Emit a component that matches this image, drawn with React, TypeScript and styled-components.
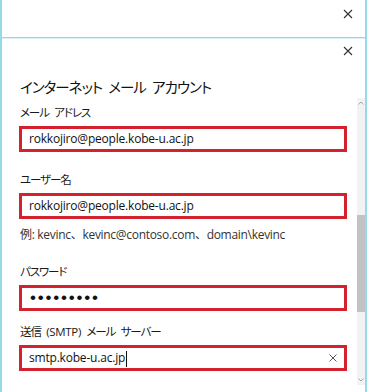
import React from "react";
import styled, { createGlobalStyle } from "styled-components";

const GlobalStyle = createGlobalStyle`
  html, body { margin: 0; padding: 0; background: #ffffff; }
  body {
    font-family: "Open Sans", "Noto Sans CJK JP", sans-serif;
    color: #1a1a1a;
  }
  * { box-sizing: border-box; }
`;

const Frame = styled.div`
  width: 367px;
  height: 392px;
  border-left: 2px solid #93dbe8;
  border-right: 2px solid #93dbe8;
  display: flex;
  flex-direction: column;
  overflow: hidden;
  background: #fff;
`;

const TopBar = styled.div`
  height: 38px;
  flex: none;
  display: flex;
  justify-content: flex-end;
  align-items: flex-start;
  padding: 9px 12px 0 0;
  border-bottom: 1px solid #93dbe8;
  box-shadow: 0 1px 0 #d6f1f6;
`;

const Panel = styled.div`
  flex: 1;
  display: flex;
  flex-direction: column;
  min-height: 0;
`;

const PanelCloseRow = styled.div`
  height: 38px;
  flex: none;
  display: flex;
  justify-content: flex-end;
  align-items: flex-start;
  padding: 8px 12px 0 0;
`;

const CloseIcon = styled.svg`
  width: 10px;
  height: 10px;
  display: block;
`;

const Title = styled.h1`
  margin: 0;
  height: 22px;
  flex: none;
  padding-left: 18px;
  font-size: 14.5px;
  letter-spacing: -1px;
  word-spacing: 4px;
  line-height: 22px;
  font-weight: 400;
  color: #111;
  font-family: "Noto Sans CJK JP", sans-serif;
  font-feature-settings: "palt";
  white-space: nowrap;
`;

const ScrollArea = styled.div`
  flex: none;
  height: 287px;
  display: flex;
  flex-direction: row;
`;

const Content = styled.div`
  flex: 1;
  padding: 7px 10px 0 17px;
  display: flex;
  flex-direction: column;
  overflow: hidden;
`;

const Label = styled.div<{ $top: number }>`
  margin-top: ${(p) => p.$top}px;
  padding-left: 1px;
  font-size: 11.5px;
  letter-spacing: -1.1px;
  word-spacing: 3.5px;
  line-height: 16px;
  height: 16px;
  color: #1a1a1a;
  font-feature-settings: "palt";
  white-space: nowrap;
`;

const Latin = styled.span`
  letter-spacing: -0.3px;
  word-spacing: 0;
`;

const Hint = styled.div`
  margin-top: 8px;
  padding-left: 1px;
  font-size: 12px;
  letter-spacing: -0.3px;
  line-height: 16px;
  height: 16px;
  color: #333;
  white-space: nowrap;
`;

const Box = styled.div`
  margin-top: 5px;
  height: 26px;
  flex: none;
  width: 100%;
  border: 3px solid #d3222d;
  display: flex;
  align-items: center;
  padding: 0 7px 0 7px;
  background: #fff;
`;

const BoxText = styled.span`
  flex: 1;
  font-size: 12px;
  letter-spacing: -0.2px;
  line-height: 18px;
  color: #111;
  white-space: nowrap;
`;

const Dots = styled.span`
  flex: 1;
  padding-left: 1px;
  font-family: "Liberation Sans", sans-serif;
  font-size: 17px;
  line-height: 18px;
  letter-spacing: 1.8px;
  color: #111;
`;

const Caret = styled.span`
  display: inline-block;
  width: 1px;
  height: 16px;
  background: #111;
  vertical-align: middle;
  margin-left: 1px;
`;

const ClearIcon = styled.svg`
  width: 8px;
  height: 8px;
  flex: none;
  display: block;
`;

const Scrollbar = styled.div`
  width: 8px;
  flex: none;
  background: #f2f2f2;
  display: flex;
  flex-direction: column;
`;

const ArrowIcon = styled.svg`
  width: 8px;
  height: 10px;
  flex: none;
  display: block;
`;

const ScrollGap = styled.div<{ $h?: number }>`
  ${(p) => (p.$h !== undefined ? `height: ${p.$h}px; flex: none;` : "flex: 1;")}
`;

const Thumb = styled.div`
  height: 97px;
  flex: none;
  background: #c2c2c2;
`;

function Close({ color = "#333" }: { color?: string }) {
  return (
    <CloseIcon viewBox="0 0 10 10">
      <path d="M1 1 L9 9 M9 1 L1 9" stroke={color} strokeWidth="1.1" fill="none" />
    </CloseIcon>
  );
}

export default function App() {
  return (
    <>
      <GlobalStyle />
      <Frame>
        <TopBar>
          <Close />
        </TopBar>
        <Panel>
          <PanelCloseRow>
            <Close />
          </PanelCloseRow>
          <Title>インターネット メール アカウント</Title>
          <ScrollArea>
            <Content>
              <Label $top={0}>メール アドレス</Label>
              <Box>
                <BoxText>rokkojiro@people.kobe-u.ac.jp</BoxText>
              </Box>
              <Label $top={20}>ユーザー名</Label>
              <Box>
                <BoxText>rokkojiro@people.kobe-u.ac.jp</BoxText>
              </Box>
              <Hint>例: kevinc、kevinc@contoso.com、domain\kevinc</Hint>
              <Label $top={21}>パスワード</Label>
              <Box>
                <Dots>•••••••••</Dots>
              </Box>
              <Label $top={13}>
                送信 <Latin>(SMTP)</Latin> メール サーバー
              </Label>
              <Box>
                <BoxText>
                  smtp.kobe-u.ac.jp
                  <Caret />
                </BoxText>
                <ClearIcon viewBox="0 0 8 8">
                  <path d="M0.5 0.5 L7.5 7.5 M7.5 0.5 L0.5 7.5" stroke="#555" strokeWidth="1" fill="none" />
                </ClearIcon>
              </Box>
            </Content>
            <Scrollbar>
              <ArrowIcon viewBox="0 0 8 10">
                <path d="M1.5 6.5 L4 4 L6.5 6.5" stroke="#a6a6a6" strokeWidth="1" fill="none" />
              </ArrowIcon>
              <ScrollGap $h={107} />
              <Thumb />
              <ScrollGap />
              <ArrowIcon viewBox="0 0 8 10">
                <path d="M1.5 3.5 L4 6 L6.5 3.5" stroke="#a6a6a6" strokeWidth="1" fill="none" />
              </ArrowIcon>
            </Scrollbar>
          </ScrollArea>
        </Panel>
      </Frame>
    </>
  );
}
